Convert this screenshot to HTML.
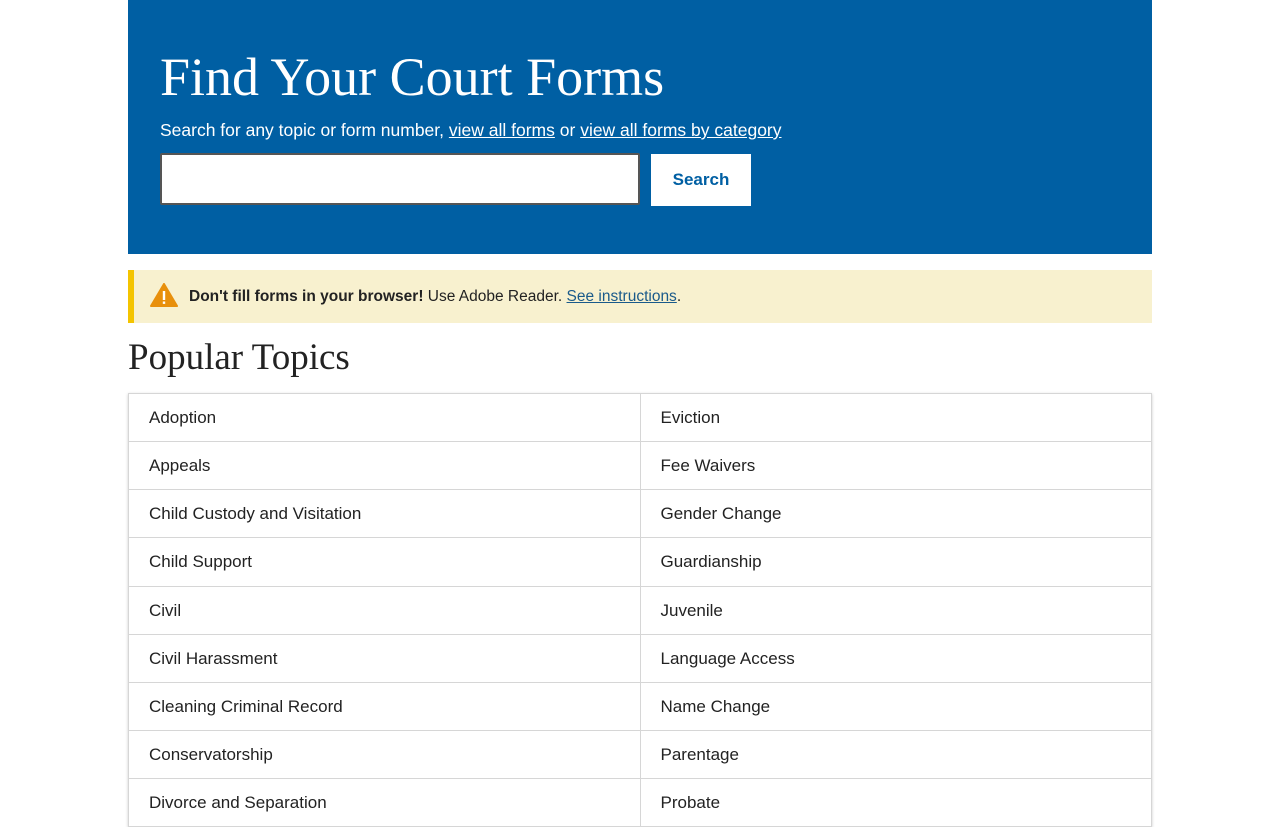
<!DOCTYPE html>
<html><head><style>
body{margin:0;background:#fff;font-family:"Liberation Sans",sans-serif;color:#222;overflow:hidden}
.hero{position:absolute;left:128px;top:0;width:1024px;height:254px;background:#005fa3;color:#fff}
.hero h1{position:absolute;left:32px;top:46px;margin:0;font-family:"Liberation Serif",serif;font-weight:normal;font-size:54px;line-height:62px}
.hero p{position:absolute;left:32px;top:118px;margin:0;font-size:17.5px;line-height:24px}
.hero a{color:#fff;text-decoration:underline}
.inp{position:absolute;left:32px;top:153px;width:476px;height:48px;background:#fff;border:2px solid #555;border-radius:2px}
.btn{position:absolute;left:523px;top:154px;width:100px;height:52px;background:#fff;color:#005fa3;font-weight:bold;font-size:17px;line-height:52px;text-align:center}
.warn{position:absolute;left:128px;top:270px;width:1024px;height:53px;background:#f8f1cf;border-left:6px solid #f4c400;box-sizing:border-box;font-size:15.5px;line-height:53px}
.warn span{position:absolute;left:55px}
.warn a{color:#1a5a8a}
h2{position:absolute;left:128px;top:336px;margin:0;font-family:"Liberation Serif",serif;font-weight:normal;font-size:37px;line-height:44px;color:#222}
table{position:absolute;left:128px;top:393px;width:1024px;border-collapse:collapse;border:1px solid #999;box-shadow:0 1px 3px rgba(0,0,0,.2)}
td{width:50%;height:47px;border:1px solid #d6d6d6;padding:0 0 0 20px;font-size:17px;color:#222;box-sizing:border-box}
</style></head><body>
<div class="hero">
<h1>Find Your Court Forms</h1>
<p>Search for any topic or form number, <a>view all forms</a> or <a>view all forms by category</a></p>
<div class="inp"></div>
<div class="btn">Search</div>
</div>
<div class="warn">
<svg style="position:absolute;left:16px;top:13px" width="28" height="24" viewBox="0 0 28 24"><path d="M14 1 L27 23 L1 23 Z" fill="#e8900c" stroke="#e8900c" stroke-linejoin="round" stroke-width="2"/><rect x="12.8" y="8" width="2.4" height="9" fill="#fff"/><rect x="12.8" y="18.5" width="2.4" height="2.4" fill="#fff"/></svg>
<span><b>Don't fill forms in your browser!</b> Use Adobe Reader. <a href="#">See instructions</a>.</span>
</div>
<h2>Popular Topics</h2>
<table>
<tr><td style="height:48px">Adoption</td><td>Eviction</td></tr>
<tr><td style="height:48px">Appeals</td><td>Fee Waivers</td></tr>
<tr><td style="height:48px">Child Custody and Visitation</td><td>Gender Change</td></tr>
<tr><td style="height:49px">Child Support</td><td>Guardianship</td></tr>
<tr><td style="height:48px">Civil</td><td>Juvenile</td></tr>
<tr><td style="height:48px">Civil Harassment</td><td>Language Access</td></tr>
<tr><td style="height:48px">Cleaning Criminal Record</td><td>Name Change</td></tr>
<tr><td style="height:48px">Conservatorship</td><td>Parentage</td></tr>
<tr><td style="height:48px">Divorce and Separation</td><td>Probate</td></tr>
</table>
</body></html>
